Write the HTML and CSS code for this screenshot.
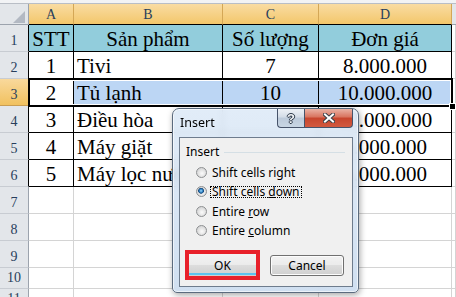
FILE: index.html
```html
<!DOCTYPE html>
<html lang="vi">
<head>
  <meta charset="UTF-8" />
  <title>Insert</title>
  <link rel="stylesheet" href="styles.css">
</head>
<body>
  <div class="sheet">
    <div class="topbar"></div>
    <div class="grid">
      <div class="corner"><svg width="12" height="12" viewBox="0 0 12 12"><polygon points="12,0 12,12 0,12" fill="#b3b9c3"/></svg></div>
      <div class="ch">A</div><div class="ch">B</div><div class="ch">C</div><div class="ch">D</div><div class="ch off"></div>

      <div class="rh tb">1</div><div class="c t head">STT</div><div class="c t head">Sản phẩm</div><div class="c t head">Số lượng</div><div class="c t head">Đơn giá</div><div class="c"></div>
      <div class="rh tb">2</div><div class="c t">1</div><div class="c t name">Tivi</div><div class="c t">7</div><div class="c t">8.000.000</div><div class="c"></div>
      <div class="rh tb on">3</div><div class="c t">2</div><div class="c t name sel">Tủ lạnh</div><div class="c t sel">10</div><div class="c t sel">10.000.000</div><div class="c"></div>
      <div class="rh tb">4</div><div class="c t">3</div><div class="c t name">Điều hòa</div><div class="c t"></div><div class="c t">12.000.000</div><div class="c"></div>
      <div class="rh tb">5</div><div class="c t">4</div><div class="c t name">Máy giặt</div><div class="c t"></div><div class="c t">6.000.000</div><div class="c"></div>
      <div class="rh tb">6</div><div class="c t">5</div><div class="c t name">Máy lọc nước</div><div class="c t"></div><div class="c t">5.000.000</div><div class="c"></div>
      <div class="rh">7</div><div class="c"></div><div class="c"></div><div class="c"></div><div class="c"></div><div class="c"></div>
      <div class="rh">8</div><div class="c"></div><div class="c"></div><div class="c"></div><div class="c"></div><div class="c"></div>
      <div class="rh">9</div><div class="c"></div><div class="c"></div><div class="c"></div><div class="c"></div><div class="c"></div>
      <div class="rh">10</div><div class="c"></div><div class="c"></div><div class="c"></div><div class="c"></div><div class="c"></div>
      <div class="rh">11</div><div class="c"></div><div class="c"></div><div class="c"></div><div class="c"></div><div class="c"></div>
    </div>

    <!-- selected range A3:D3 -->
    <div class="selection"><span class="handle"></span></div>

    <div class="dialog">
      <div class="titlebar">
        <span class="title">Insert</span>
        <div class="caption">
          <span class="cap help">?</span>
          <span class="cap close">
            <svg width="12" height="10" viewBox="0 0 12 10">
              <path d="M2 1.5 L10 8.5 M10 1.5 L2 8.5" stroke="#3b4048" stroke-width="4" stroke-linecap="square"/>
              <path d="M2 1.5 L10 8.5 M10 1.5 L2 8.5" stroke="#ffffff" stroke-width="2" stroke-linecap="square"/>
            </svg>
          </span>
        </div>
      </div>
      <div class="client">
        <div class="group"><span>Insert</span></div>
        <div class="opts">
          <div class="opt"><span class="radio"></span><span>Shift cells right</span></div>
          <div class="opt"><span class="radio on"></span><span class="focus">Shift cells <u>d</u>own</span></div>
          <div class="opt"><span class="radio"></span><span>Entire <u>r</u>ow</span></div>
          <div class="opt"><span class="radio"></span><span>Entire <u>c</u>olumn</span></div>
        </div>
        <div class="buttons">
          <div class="btn ok">OK</div>
          <div class="btn cancel">Cancel</div>
        </div>
      </div>
    </div>
  </div>
</body>
</html>
```

FILE: styles.css
```css
* {
  box-sizing: border-box;
}

body {
  margin: 0;
  background: #fff;
}

.sheet {
  position: relative;
  width: 456px;
  height: 297px;
  overflow: hidden;
  display: flex;
  flex-direction: column;
  font-family: "Liberation Serif", serif;
  color: #000;
}

.topbar {
  height: 4px;
  flex: none;
  background: #f2f3f5;
  border-bottom: 1px solid #b9bec6;
}

.grid {
  flex: none;
  display: grid;
  grid-template-columns: 29px 45px 149px 96px 133px 1fr;
  grid-template-rows: 21px repeat(9, 27px) 21px 21px;
}

/* headers */
.corner {
  background: #e3e6ea;
  border-right: 1px solid #9ca3ad;
  border-bottom: 1px solid #9ca3ad;
  display: flex;
  align-items: flex-end;
  justify-content: flex-end;
  padding: 0 3px 1px 0;
}

.ch {
  display: flex;
  align-items: center;
  justify-content: center;
  padding-top: 1px;
  font-size: 14px;
  color: #283e5c;
  background: linear-gradient(#f9dca3, #f3c76b);
  border-right: 1px solid #d4a756;
  border-bottom: 1px solid #000;
}

.ch.off {
  background: #e3e6ea;
  border-right: none;
  border-bottom-color: #9ca3ad;
}

.rh {
  display: flex;
  align-items: flex-end;
  justify-content: center;
  padding-bottom: 3px;
  font-size: 14px;
  line-height: 14px;
  color: #283e5c;
  background: #e3e6ea;
  border-right: 1px solid #9ca3ad;
  border-bottom: 1px solid #c8ccd2;
}

.rh.tb {
  border-right-color: #000;
}

.rh.on {
  background: linear-gradient(#f9d99c, #f1c15f);
  border-bottom-color: #c99d52;
}

/* cells */
.c {
  display: flex;
  align-items: flex-end;
  justify-content: center;
  padding-bottom: 1px;
  font-size: 21px;
  line-height: 21px;
  white-space: nowrap;
  overflow: hidden;
  border-right: 1px solid #d4d4d4;
  border-bottom: 1px solid #d4d4d4;
}

.c.t {
  border-color: #000;
}

.c.head {
  background: #92cddc;
}

.c.name {
  justify-content: flex-start;
  padding-left: 3px;
}

.c.sel {
  background: #bcd6f4;
}

.selection {
  position: absolute;
  left: 28px;
  top: 78px;
  width: 425px;
  height: 29px;
  border: 2px solid #000;
  box-shadow: inset 0 0 0 1px #fff;
}

.handle {
  position: absolute;
  right: -5px;
  bottom: -5px;
  width: 7px;
  height: 7px;
  background: #000;
  border: 1px solid #fff;
}

/* Insert dialog */
.dialog {
  position: absolute;
  left: 172px;
  top: 108px;
  width: 187px;
  height: 185px;
  padding: 0 5px 5px 6px;
  display: flex;
  flex-direction: column;
  border: 1px solid #5b6b7e;
  border-radius: 7px 7px 5px 5px;
  background: linear-gradient(rgba(222, 234, 247, 0.9), rgba(203, 220, 239, 0.9));
  backdrop-filter: blur(3px);
  box-shadow: inset 0 0 0 1px rgba(255, 255, 255, 0.6), 1px 2px 6px rgba(0, 0, 0, 0.35);
  font-family: "Noto Sans", sans-serif;
  font-size: 12px;
  color: #000;
}

.titlebar {
  flex: none;
  height: 28px;
  display: flex;
  justify-content: space-between;
  align-items: flex-start;
}

.title {
  padding: 7px 0 0 1px;
  font-size: 12.5px;
  line-height: 14px;
}

.caption {
  display: flex;
}

.cap {
  height: 19px;
  display: flex;
  align-items: center;
  justify-content: center;
  border: 1px solid #46536a;
  border-top: none;
}

.help {
  width: 27px;
  border-right: none;
  border-radius: 0 0 0 4px;
  background: linear-gradient(#edf1f6, #d3dce7 45%, #bccada 50%, #c9d6e4);
  font: bold 13px/1 "Liberation Sans", sans-serif;
  color: #f3f5f8;
  text-shadow: 1px 0 0 #2c3949, -1px 0 0 #2c3949, 0 1px 0 #2c3949, 0 -1px 0 #2c3949;
}

.close {
  width: 49px;
  border-radius: 0 0 4px 0;
  background: linear-gradient(#eab2a4, #d8735e 45%, #c7452d 50%, #d2593f);
}

.client {
  flex: 1;
  display: flex;
  flex-direction: column;
  background: #f0f0f0;
  border: 1px solid #6e7c8d;
}

.group {
  display: flex;
  align-items: center;
  margin: 7px 7px 0 6px;
  line-height: 14px;
}

.group::after {
  content: "";
  flex: 1;
  margin-left: 5px;
  border-top: 1px solid #d5dfe5;
}

.opts {
  margin: 4px 0 0 16px;
}

.opt {
  display: flex;
  align-items: center;
  gap: 5px;
  height: 19.33px;
  line-height: 13px;
}

.radio {
  flex: none;
  width: 11px;
  height: 11px;
  border-radius: 50%;
  border: 1px solid #8e9092;
  background: radial-gradient(circle at 55% 60%, #fbfbfb 0, #e4e4e4 45%, #c6c7c9 100%);
}

.radio.on {
  background:
    radial-gradient(circle at 45% 42%, #a5dcfb 0, #3a8fd1 1.4px, #184a7c 2.6px, rgba(24, 74, 124, 0) 3.2px),
    radial-gradient(circle at 55% 60%, #fbfbfb 0, #e4e4e4 45%, #c6c7c9 100%);
}

.focus {
  display: inline-block;
  margin-left: -2px;
  padding: 0 2px;
  line-height: 12px;
  outline: 1px dotted #000;
  outline-offset: -1px;
}

.buttons {
  display: flex;
  align-items: center;
  gap: 10px;
  margin: 10px 0 0 5px;
}

.btn {
  display: flex;
  align-items: center;
  justify-content: center;
}

.ok {
  width: 75px;
  height: 30px;
  border: 4px solid #e8202a;
  background: linear-gradient(#f2f2f2, #ebebeb 50%, #dddddd 50%, #d2d2d2 calc(100% - 3px), #5cc2ee calc(100% - 3px), #5cc2ee calc(100% - 1px), #cfcfcf calc(100% - 1px));
}

.cancel {
  width: 74px;
  height: 21px;
  border: 1px solid #707070;
  border-radius: 3px;
  background: linear-gradient(#f2f2f2, #ebebeb 50%, #dddddd 50%, #cfcfcf);
  box-shadow: inset 0 0 0 1px #fcfcfc;
}
```
